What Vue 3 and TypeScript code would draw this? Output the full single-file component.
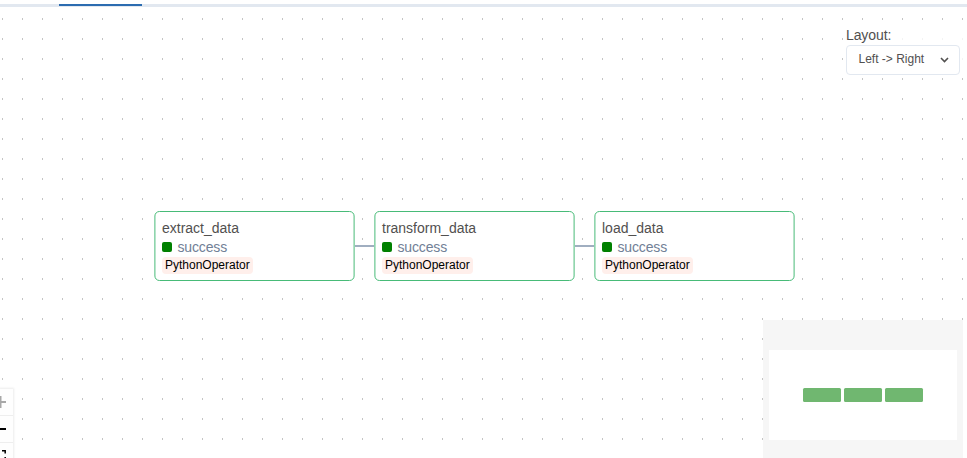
<script setup lang="ts">
interface TaskNode {
  id: string
  state: string
  operator: string
  x: number
}

const tasks: TaskNode[] = [
  { id: 'extract_data', state: 'success', operator: 'PythonOperator', x: 154 },
  { id: 'transform_data', state: 'success', operator: 'PythonOperator', x: 374 },
  { id: 'load_data', state: 'success', operator: 'PythonOperator', x: 594 },
]
</script>

<template>
  <main class="graph-view">
    <div class="tab-line"><div class="tab-active"></div></div>
    <section class="canvas">
      <svg class="dots" width="967" height="451">
        <defs>
          <pattern id="grid" width="20" height="20" patternUnits="userSpaceOnUse">
            <rect x="2" y="11" width="1" height="2" fill="#c4c4c4" />
          </pattern>
        </defs>
        <rect width="967" height="451" fill="url(#grid)" />
      </svg>

      <svg class="edges" width="967" height="451">
        <path d="M354 239H375M574 239H595" />
      </svg>

      <article v-for="task in tasks" :key="task.id" class="node" :style="{ left: task.x + 'px' }">
        <svg class="outline" width="201" height="70">
          <rect x="0.9" y="0.5" width="199.2" height="69" rx="4.5" />
        </svg>
        <div class="name">{{ task.id }}</div>
        <div class="state"><span class="swatch"></span>{{ task.state }}</div>
        <div class="operator">{{ task.operator }}</div>
      </article>

      <div class="layout-panel">
        <div class="layout-label">Layout:</div>
        <div class="select">
          <span>Left -&gt; Right</span>
          <svg width="9" height="6" viewBox="0 0 9 6"><path d="M1 1L4.5 4.5L8 1" /></svg>
        </div>
      </div>

      <div class="controls">
        <div class="control">
          <svg width="14" height="26"><path class="muted" d="M0 13H6M0.5 7V19" /></svg>
        </div>
        <div class="control">
          <svg width="14" height="26"><path d="M0 13H6" /></svg>
        </div>
        <div class="control">
          <svg width="14" height="26"><path class="fit" d="M2 7.7H5.2V10.5M5.2 14V16" /></svg>
        </div>
      </div>

      <div class="minimap">
        <div class="viewport">
          <span v-for="task in tasks" :key="task.id" class="mini-node"></span>
        </div>
      </div>
    </section>
  </main>
</template>

<style>
body {
  background: #fff;
  overflow: hidden;
}
</style>

<style scoped>
.graph-view {
  width: 967px;
  height: 458px;
  overflow: hidden;
  padding-top: 4px;
  box-sizing: border-box;
  font-family: 'Liberation Sans', Arial, sans-serif;
  color: #51504f;
}
.tab-line {
  height: 3px;
  background: #e2e8f0;
}
.tab-active {
  width: 83px;
  height: 2px;
  margin-left: 59px;
  background: #2b6cb0;
}
.canvas {
  position: relative;
  height: 451px;
  overflow: hidden;
}
.dots,
.edges,
.outline {
  position: absolute;
  inset: 0;
}
.edges path {
  stroke: #a0aec0;
  stroke-width: 2;
}
.node {
  position: absolute;
  top: 204px;
  width: 201px;
  height: 70px;
  box-sizing: border-box;
  padding: 8px 8px 0;
  border-radius: 5px;
  background: #fff;
}
.outline rect {
  fill: none;
  stroke: #48bb78;
  stroke-width: 1;
}
.name {
  height: 19px;
  font-size: 14px;
  line-height: 19px;
}
.state {
  display: flex;
  align-items: center;
  height: 18px;
  font-size: 14px;
  letter-spacing: -0.15px;
  color: #718096;
}
.swatch {
  width: 10px;
  height: 10px;
  margin: 0 6px 0 -0.5px;
  border-radius: 2px;
  background: #008000;
}
.operator {
  width: fit-content;
  height: 17px;
  margin-top: 1px;
  padding: 0 3px;
  border-radius: 4px;
  background: #ffefeb;
  color: #000;
  font-size: 12px;
  line-height: 17px;
}
.layout-panel {
  position: absolute;
  top: 18px;
  left: 846px;
  width: 121px;
  height: 52px;
  background: rgba(255, 255, 255, 0.8);
}
.layout-label {
  height: 20px;
  font-size: 14px;
  line-height: 20px;
  letter-spacing: -0.1px;
}
.select {
  display: flex;
  align-items: center;
  justify-content: space-between;
  width: 114px;
  height: 30px;
  box-sizing: border-box;
  padding: 0 10px 2px 11.5px;
  border: 1px solid #e2e8f0;
  border-radius: 4px;
  background: #fff;
  font-size: 12px;
}
.select svg {
  margin-top: 2px;
}
.select path {
  fill: none;
  stroke: #51504f;
  stroke-width: 1.6;
}
.controls {
  position: absolute;
  top: 382px;
  left: 0;
  width: 13px;
  box-shadow: 0 0 2px 1px rgba(0, 0, 0, 0.08);
}
.control {
  height: 26px;
  border-bottom: 1px solid #eee;
  background: #fefefe;
}
.control svg {
  display: block;
}
.control path {
  fill: none;
  stroke: #000;
  stroke-width: 2;
}
.control .muted {
  stroke: #a8a8a8;
}
.control .fit {
  stroke-width: 1.5;
}
.minimap {
  position: absolute;
  top: 313px;
  left: 763px;
  width: 200px;
  height: 150px;
  padding: 30px 6px;
  box-sizing: border-box;
  background: #f6f6f6;
}
.viewport {
  display: flex;
  align-items: center;
  justify-content: center;
  gap: 3px;
  height: 90px;
  background: #fff;
}
.mini-node {
  width: 38px;
  height: 14px;
  border-radius: 1.5px;
  background: #70b770;
}
</style>
